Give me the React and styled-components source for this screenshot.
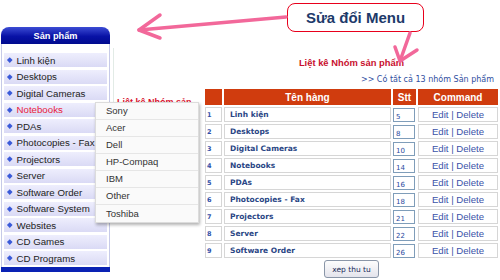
import styled, { createGlobalStyle } from "styled-components";

const menuItems = [
    "Linh kiện",
    "Desktops",
    "Digital Cameras",
    "Notebooks",
    "PDAs",
    "Photocopies - Fax",
    "Projectors",
    "Server",
    "Software Order",
    "Software System",
    "Websites",
    "CD Games",
    "CD Programs",
];

const brands = ["Sony", "Acer", "Dell", "HP-Compaq", "IBM", "Other", "Toshiba"];

const groups = [
    { name: "Linh kiện", stt: 5 },
    { name: "Desktops", stt: 8 },
    { name: "Digital Cameras", stt: 10 },
    { name: "Notebooks", stt: 14 },
    { name: "PDAs", stt: 16 },
    { name: "Photocopies - Fax", stt: 18 },
    { name: "Projectors", stt: 21 },
    { name: "Server", stt: 22 },
    { name: "Software Order", stt: 26 },
];

const App = () => {
    return (
        <>
            <GlobalStyle />
            <Page>
                <SideMenu>
                    <MenuHeader>Sản phẩm</MenuHeader>
                    <MenuBody>
                        {menuItems.map((item) => (
                            <MenuItem key={item} $active={item === "Notebooks"}>
                                <Bullet />
                                {item}
                                {item === "Notebooks" && (
                                    <Flyout>
                                        {brands.map((b) => (
                                            <FlyoutItem key={b}>{b}</FlyoutItem>
                                        ))}
                                    </Flyout>
                                )}
                            </MenuItem>
                        ))}
                    </MenuBody>
                    <MenuFooter />
                </SideMenu>

                <Gutter>
                    {/* title of the page behind, mostly hidden by the open flyout */}
                    <GhostTitle>Liệt kê Nhóm sản</GhostTitle>
                </Gutter>

                <Content>
                    <Title>Liệt kê Nhóm sản phẩm</Title>
                    <Summary>&gt;&gt; Có tất cả 13 nhóm Sản phẩm</Summary>
                    <GroupTable>
                        <thead>
                            <tr>
                                <Th $w={17}></Th>
                                <Th $w={167}>Tên hàng</Th>
                                <Th $w={23}>Stt</Th>
                                <Th $w={80}>Command</Th>
                            </tr>
                        </thead>
                        <tbody>
                            {groups.map(({ name, stt }, index) => (
                                <tr key={name}>
                                    <NumCell>{index + 1}</NumCell>
                                    <NameCell>{name}</NameCell>
                                    <SttCell>
                                        <SttInput readOnly value={stt} />
                                    </SttCell>
                                    <CmdCell>Edit | Delete</CmdCell>
                                </tr>
                            ))}
                        </tbody>
                    </GroupTable>
                    <SortButton>xep thu tu</SortButton>
                </Content>

                {/* callout annotation */}
                <Callout>Sửa đổi Menu</Callout>
                <Arrows viewBox="0 0 500 280">
                    <g stroke="#f2689a" strokeWidth="3.5" strokeLinecap="round" fill="none">
                        <line x1="286" y1="17" x2="139" y2="30" />
                        <polyline points="160,15 139,30 160,38" strokeLinejoin="round" />
                        <line x1="410" y1="33" x2="400" y2="61" />
                        <polyline points="395,47 400,61 417,50" strokeLinejoin="round" />
                    </g>
                </Arrows>
            </Page>
        </>
    );
};

export default App;

const GlobalStyle = createGlobalStyle`
    html, body {
        margin: 0;
        padding: 0;
        background: #fff;
    }
    body {
        font-family: "Liberation Sans", Arial, sans-serif;
    }
`;

const Page = styled.div`
    position: relative;
    width: 500px;
    height: 280px;
    overflow: hidden;
    display: flex;
    align-items: flex-start;
    background: #fff;
`;

const SideMenu = styled.div`
    margin: 27px 0 0 1px;
    width: 109px;
    display: flex;
    flex-direction: column;
    position: relative;
    z-index: 3;
`;

const MenuHeader = styled.div`
    height: 17px;
    border-radius: 8px 8px 0 0;
    background: linear-gradient(#3c4cd4, #0812a6 55%, #000a8e);
    color: #fff;
    font-weight: bold;
    font-size: 9.2px;
    display: flex;
    align-items: center;
    justify-content: center;
`;

const MenuBody = styled.div`
    display: flex;
    flex-direction: column;
    gap: 2.5px;
    padding: 9px 2px 2px;
    border-left: 1px solid #c6cae8;
    border-right: 1px solid #c6cae8;
    background: #fff;
`;

const MenuItem = styled.div`
    position: relative;
    height: 14px;
    display: flex;
    align-items: center;
    gap: 5px;
    padding-left: 3px;
    background: linear-gradient(#eeeefd, #dadaf5);
    font-size: 9.7px;
    color: ${(p) => (p.$active ? "#e8203c" : "#222")};
    white-space: nowrap;
`;

const Bullet = styled.span`
    width: 3.5px;
    height: 3.5px;
    margin-left: 1px;
    background: #3a5ad8;
    transform: rotate(45deg);
    flex-shrink: 0;
`;

const MenuFooter = styled.div`
    height: 5px;
    background: #0a22b4;
`;

const Flyout = styled.div`
    position: absolute;
    left: 91px;
    top: -1px;
    width: 102px;
    background: #fafafa;
    border: 1px solid #dcdcdc;
    box-shadow: 1px 2px 3px rgba(0, 0, 0, 0.3);
    z-index: 5;
`;

const FlyoutItem = styled.div`
    height: 16px;
    display: flex;
    align-items: center;
    padding-left: 10px;
    border-bottom: 1px solid #e6e6e6;
    font-size: 9.5px;
    color: #333;

    &:last-child {
        border-bottom: none;
        height: 17px;
    }
`;

const Gutter = styled.div`
    width: 72px;
    margin: 48px 0 0 3px;
    height: 120px;
    border-left: 1px solid #e2ebe6;
`;

const GhostTitle = styled.div`
    margin: 49px 0 0 3px;
    font-size: 9px;
    line-height: 10px;
    font-weight: bold;
    color: #d8102e;
    white-space: nowrap;
`;

const Content = styled.div`
    margin-left: 17px;
    width: 297px;
    padding-top: 57px;
    display: flex;
    flex-direction: column;
`;

const Title = styled.div`
    text-align: center;
    font-size: 9.4px;
    font-weight: bold;
    line-height: 12px;
    color: #c8102e;
`;

const Summary = styled.div`
    margin-top: 5px;
    padding-right: 6px;
    text-align: right;
    font-family: "DejaVu Sans", sans-serif;
    font-size: 8px;
    line-height: 12px;
    color: #2f4ea0;
    white-space: nowrap;
`;

const GroupTable = styled.table`
    margin-top: 1px;
    width: 297px;
    border-collapse: separate;
    border-spacing: 2px;
    table-layout: fixed;
`;

const Th = styled.th`
    width: ${(p) => p.$w}px;
    height: 16px;
    padding: 0;
    background: #d03c0e;
    color: #fff;
    font-size: 10px;
    font-weight: bold;
    text-align: center;
`;

const Td = styled.td`
    height: 13px;
    padding: 0;
    border: 1px solid #d6d6d6;
    white-space: nowrap;
    overflow: hidden;
`;

const NumCell = styled(Td)`
    padding-left: 1px;
    font-family: "DejaVu Sans", sans-serif;
    font-size: 6.5px;
    font-weight: bold;
    color: #3050a8;
`;

const NameCell = styled(Td)`
    padding-left: 5px;
    font-family: "DejaVu Sans", sans-serif;
    font-size: 7.5px;
    font-weight: bold;
    color: #2a4685;
`;

const SttCell = styled(Td)`
    border: none;
    height: 15px;
`;

const SttInput = styled.input`
    display: block;
    width: 22px;
    height: 14px;
    box-sizing: border-box;
    margin: 0;
    padding: 4px 0 0 2px;
    border: 1px solid #7f9db9;
    background: #fff;
    font-family: "DejaVu Sans", sans-serif;
    font-size: 7px;
    color: #2a4aa0;
    outline: none;
`;

const CmdCell = styled(Td)`
    text-align: center;
    font-size: 9.6px;
    color: #3a52a8;
`;

const SortButton = styled.button`
    display: block;
    margin: 0 auto;
    width: 55px;
    height: 18px;
    padding: 0;
    border: 1px solid #8a96a8;
    border-radius: 3px;
    background: linear-gradient(#fdfdfd, #e4e4ec);
    font-family: "DejaVu Sans", sans-serif;
    font-size: 7.5px;
    color: #1a2a5a;
`;

const Callout = styled.div`
    position: absolute;
    left: 287px;
    top: 3px;
    width: 137px;
    height: 29px;
    box-sizing: border-box;
    border: 1.5px solid #e8001c;
    border-radius: 8px;
    background: #fff;
    display: flex;
    align-items: center;
    justify-content: center;
    font-size: 15px;
    font-weight: bold;
    color: #1d3a6a;
    z-index: 6;
`;

const Arrows = styled.svg`
    position: absolute;
    left: 0;
    top: 0;
    width: 500px;
    height: 280px;
    pointer-events: none;
    z-index: 7;
`;
